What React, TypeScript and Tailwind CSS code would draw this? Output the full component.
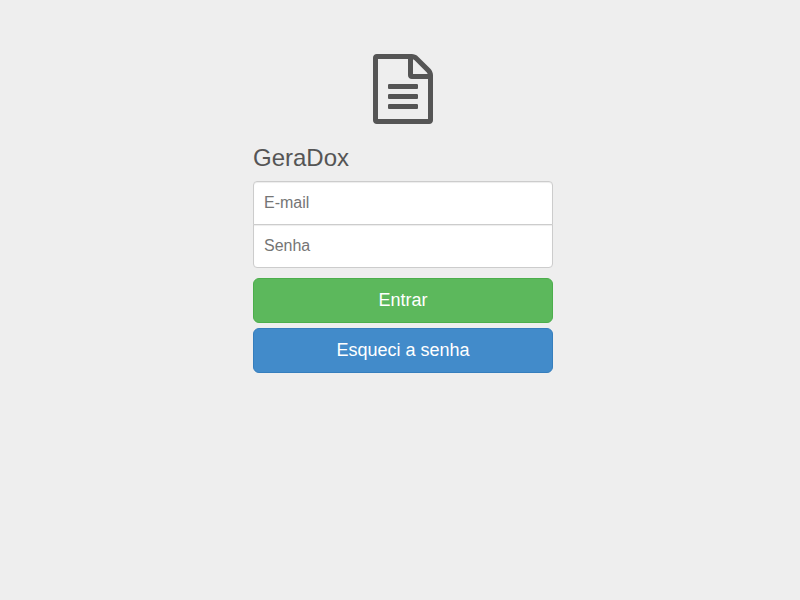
import type { InputHTMLAttributes } from "react";

function Field({ label, className, ...rest }: InputHTMLAttributes<HTMLInputElement> & { label: string }) {
  return (
    <input
      aria-label={label}
      placeholder={label}
      className={`relative block h-11 w-full border border-[#cccccc] bg-white px-2.5 text-base text-[#555555] shadow-[inset_0_1px_1px_rgba(0,0,0,0.075)] outline-none placeholder:text-[#757575] focus:z-10 focus:border-[#66afe9] ${className ?? ""}`}
      {...rest}
    />
  );
}

export default function App() {
  return (
    <main className="min-h-screen bg-[#eeeeee] pt-[54px] pr-4 pb-10 pl-[22px] font-['Liberation_Sans',Arial,sans-serif] text-[#555555]">
      <form className="mx-auto w-full max-w-[300px]" onSubmit={(e) => e.preventDefault()}>
        <svg viewBox="0 0 1536 1792" className="mx-auto block h-[70px] w-[60px]" fill="currentColor" aria-hidden="true">
          <path d="M1468 380q28 28 48 76t20 88v1152q0 40-28 68t-68 28H96q-40 0-68-28t-28-68V96q0-40 28-68T96 0h896q40 0 88 20t76 48zM1024 136v376h376q-10-29-22-41l-313-313q-12-12-41-22zm384 1528V640H992q-40 0-68-28t-28-68V128H128v1536h1280zM384 800q0-14 9-23t23-9h704q14 0 23 9t9 23v64q0 14-9 23t-23 9H416q-14 0-23-9t-9-23v-64zm736 224q14 0 23 9t9 23v64q0 14-9 23t-23 9H416q-14 0-23-9t-9-23v-64q0-14 9-23t23-9h704zm0 256q14 0 23 9t9 23v64q0 14-9 23t-23 9H416q-14 0-23-9t-9-23v-64q0-14 9-23t23-9h704z" />
        </svg>
        <h1 className="mt-5 mb-2.5 text-2xl leading-[27px] font-normal">GeraDox</h1>
        <Field type="email" label="E-mail" className="rounded-t" />
        <Field type="password" label="Senha" className="-mt-px mb-2.5 rounded-b" />
        <button type="submit" className="mb-[5px] block w-full rounded-md border border-[#4cae4c] bg-[#5cb85c] px-4 pt-[9px] pb-2.5 text-lg leading-6 text-white">
          Entrar
        </button>
        <button type="button" className="block w-full rounded-md border border-[#357ebd] bg-[#428bca] px-4 pt-[9px] pb-2.5 text-lg leading-6 text-white">
          Esqueci a senha
        </button>
      </form>
    </main>
  );
}
